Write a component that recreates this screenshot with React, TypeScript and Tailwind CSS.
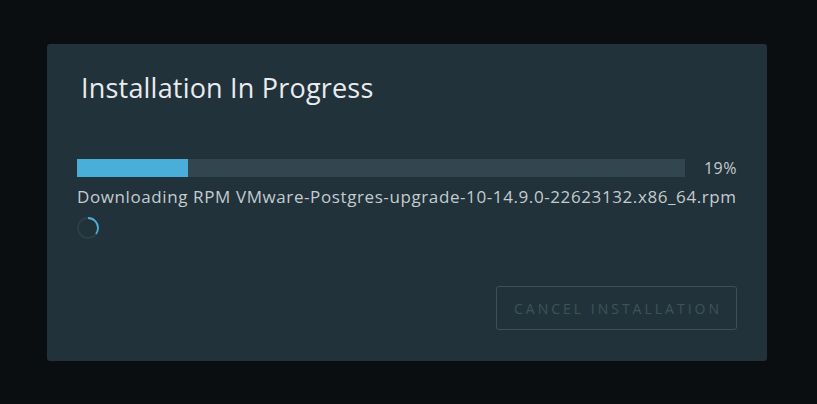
export default function App() {
  const pct = 19;
  return (
    <div className="h-[404px] w-[817px] bg-[#0a0e11] pt-[44px] pl-[47px] font-['Open_Sans',sans-serif]">
      <div className="flex h-[317px] w-[720px] flex-col rounded-[3px] bg-[#21323a] px-[30px]">
        <h1 className="mt-[27px] pl-[4px] text-[27px] leading-[34px] tracking-[0.2px] text-[#e9ecef]">
          Installation In Progress
        </h1>

        <div className="mt-[51px] flex items-center">
          <div className="h-[18px] w-[608px] bg-[#324650]">
            {/* track reads a little short of the label, as in the installer */}
            <div className="h-full bg-[#49afd9]" style={{ width: `${pct - 0.75}%` }} />
          </div>
          <span className="ml-auto text-[16px] tracking-[0.5px] text-[#c4ccd0]">{pct}%</span>
        </div>

        <p className="mt-[5px] whitespace-nowrap text-[17px] leading-[24px] tracking-[0.6px] text-[#c4ccd0]">
          Downloading RPM VMware-Postgres-upgrade-10-14.9.0-22623132.x86_64.rpm
        </p>

        <svg className="mt-[8px] h-[22px] w-[22px] -rotate-90" viewBox="0 0 22 22">
          <circle cx="11" cy="11" r="10" fill="none" stroke="#2c3f48" strokeWidth="1.8" />
          <circle
            cx="11"
            cy="11"
            r="10"
            fill="none"
            stroke="#49afd9"
            strokeWidth="1.8"
            strokeDasharray="22 60"
          />
        </svg>

        <div className="mt-[47px] flex justify-end">
          <button
            type="button"
            disabled
            className="h-[44px] w-[241px] rounded-[3px] border border-[#3d5058] pl-[3px] text-[14px] tracking-[3px] text-[#3f525a]"
          >
            CANCEL INSTALLATION
          </button>
        </div>
      </div>
    </div>
  );
}
